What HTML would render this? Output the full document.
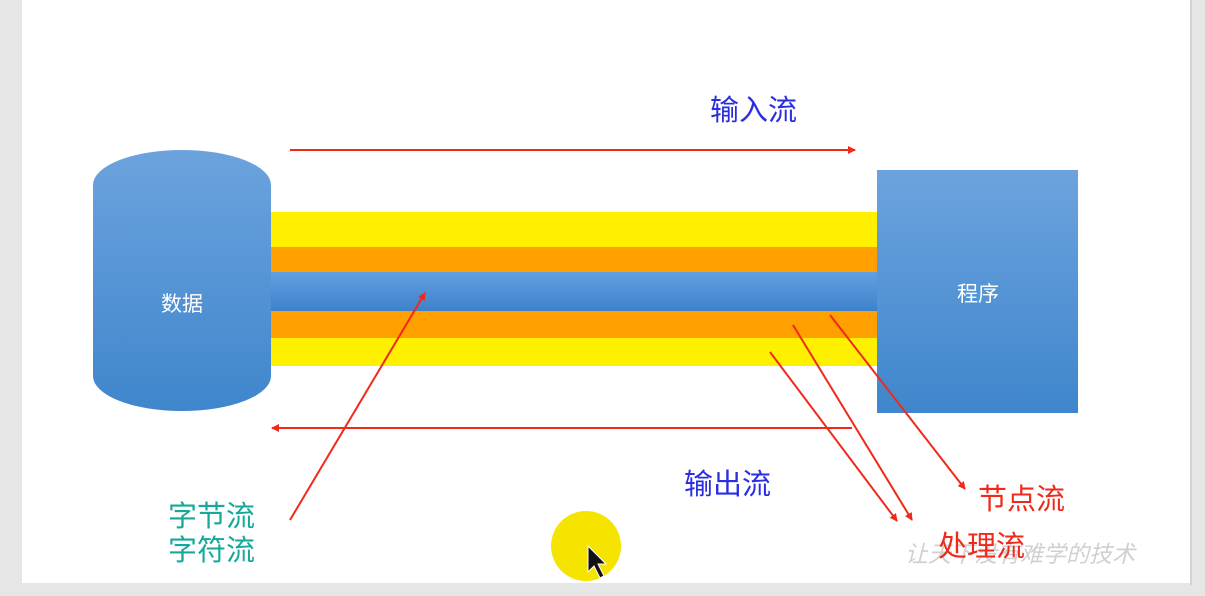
<!DOCTYPE html>
<html><head><meta charset="utf-8"><style>
body{margin:0;width:1205px;height:596px;background:#e6e6e6;overflow:hidden;font-family:"Liberation Sans","Noto Sans CJK SC",sans-serif}
</style></head><body>
<svg width="1205" height="596" xmlns="http://www.w3.org/2000/svg" style="position:absolute;left:0;top:0">
<defs>
<linearGradient id="g" x1="0" y1="0" x2="0" y2="1"><stop offset="0" stop-color="#6ca3de"/><stop offset="1" stop-color="#3f86cc"/></linearGradient>
<linearGradient id="gb" x1="0" y1="0" x2="0" y2="1"><stop offset="0" stop-color="#62a0e0"/><stop offset="1" stop-color="#3d82cc"/></linearGradient>
<marker id="a" markerWidth="8" markerHeight="8" refX="7" refY="4" orient="auto" markerUnits="userSpaceOnUse"><path d="M0,0 L8,4 L0,8z" fill="#f02a1a"/></marker>
</defs>
<rect x="22" y="0" width="1168" height="583" fill="#fff"/>
<rect x="1190" y="0" width="2" height="585" fill="#d4d4d4"/>
<rect x="270" y="212" width="608" height="35" fill="#fff000"/>
<rect x="270" y="247" width="608" height="25" fill="#ff9f00"/>
<rect x="270" y="311" width="608" height="27" fill="#ff9f00"/>
<rect x="270" y="338" width="608" height="28" fill="#fff000"/>
<rect x="270" y="272" width="610" height="39" fill="url(#gb)"/>
<path d="M93,185 A89,35 0 0 1 271,185 L271,376 A89,35 0 0 1 93,376 Z" fill="url(#g)"/>
<rect x="877" y="170" width="201" height="243" fill="url(#g)"/>
<g stroke="#f02a1a" stroke-width="2" fill="none">
<line x1="290" y1="150" x2="855" y2="150" marker-end="url(#a)"/>
<line x1="852" y1="428" x2="272" y2="428" marker-end="url(#a)"/>
<line x1="290" y1="520" x2="425" y2="293" marker-end="url(#a)"/>
<line x1="770" y1="352" x2="897" y2="521" marker-end="url(#a)"/>
<line x1="793" y1="325" x2="912" y2="520" marker-end="url(#a)"/>
<line x1="830" y1="315" x2="965" y2="489" marker-end="url(#a)"/>
</g>
<circle cx="586" cy="546" r="35" fill="#f5e400"/>
<path d="M588,546 L588,572 L594,566 L600,578 L604,576 L598,564 L606,564 Z" fill="#111" stroke="#fff" stroke-width="1"/>
<text x="182" y="311" font-size="21" fill="#fff" text-anchor="middle">数据</text>
<text x="978" y="301" font-size="21" fill="#fff" text-anchor="middle">程序</text>
<text x="710" y="120" font-size="29" fill="#2a2ee0">输入流</text>
<text x="684" y="494" font-size="29" fill="#2a2ee0">输出流</text>
<text x="168" y="526" font-size="29" fill="#17a89a">字节流</text>
<text x="168" y="560" font-size="29" fill="#17a89a">字符流</text>
<text x="978" y="509" font-size="29" fill="#f02a1a">节点流</text>
<text x="905" y="562" font-size="23" fill="#d0d0d0" font-style="italic">让天下没有难学的技术</text>
<text x="938" y="556" font-size="29" fill="#f02a1a">处理流</text>
</svg>
</body></html>
